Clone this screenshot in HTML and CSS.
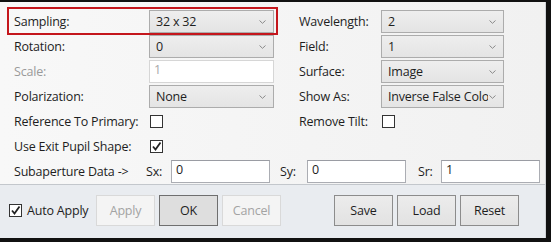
FILE: index.html
```html
<!DOCTYPE html>
<html lang="en">
<head>
    <meta charset="UTF-8">
    <title>Wavefront Map Settings</title>
    <link rel="stylesheet" href="styles.css">
</head>
<body>
    <div class="dialog">
        <div class="highlight"></div>
        <div class="settings">
            <div class="grid">
                <span class="label">Sampling:</span>
                <div class="combo"><span>32 x 32</span><svg class="chev" width="7" height="4" viewBox="0 0 7 4"><path d="M0.5 0.5 L3.5 3.3 L6.5 0.5" fill="none" stroke="#8a8a8a" stroke-width="1"/></svg></div>
                <span></span>
                <span class="label">Wavelength:</span>
                <div class="combo"><span>2</span><svg class="chev" width="7" height="4" viewBox="0 0 7 4"><path d="M0.5 0.5 L3.5 3.3 L6.5 0.5" fill="none" stroke="#8a8a8a" stroke-width="1"/></svg></div>

                <span class="label">Rotation:</span>
                <div class="combo"><span>0</span><svg class="chev" width="7" height="4" viewBox="0 0 7 4"><path d="M0.5 0.5 L3.5 3.3 L6.5 0.5" fill="none" stroke="#8a8a8a" stroke-width="1"/></svg></div>
                <span></span>
                <span class="label">Field:</span>
                <div class="combo"><span>1</span><svg class="chev" width="7" height="4" viewBox="0 0 7 4"><path d="M0.5 0.5 L3.5 3.3 L6.5 0.5" fill="none" stroke="#8a8a8a" stroke-width="1"/></svg></div>

                <span class="label disabled">Scale:</span>
                <div class="field off">1</div>
                <span></span>
                <span class="label">Surface:</span>
                <div class="combo"><span>Image</span><svg class="chev" width="7" height="4" viewBox="0 0 7 4"><path d="M0.5 0.5 L3.5 3.3 L6.5 0.5" fill="none" stroke="#8a8a8a" stroke-width="1"/></svg></div>

                <span class="label">Polarization:</span>
                <div class="combo"><span>None</span><svg class="chev" width="7" height="4" viewBox="0 0 7 4"><path d="M0.5 0.5 L3.5 3.3 L6.5 0.5" fill="none" stroke="#8a8a8a" stroke-width="1"/></svg></div>
                <span></span>
                <span class="label">Show As:</span>
                <div class="combo"><span class="clip">Inverse False Colo</span><svg class="chev" width="7" height="4" viewBox="0 0 7 4"><path d="M0.5 0.5 L3.5 3.3 L6.5 0.5" fill="none" stroke="#8a8a8a" stroke-width="1"/></svg></div>

                <span class="label">Reference To Primary:</span>
                <div class="cell"><span class="check"></span></div>
                <span></span>
                <span class="label">Remove Tilt:</span>
                <div class="cell"><span class="check"></span></div>

                <span class="label">Use Exit Pupil Shape:</span>
                <div class="cell"><span class="check"><svg width="11" height="11" viewBox="0 0 11 11"><path d="M2 5.5 L4.5 8.5 L9.5 1.5" fill="none" stroke="#222" stroke-width="1.8"/></svg></span></div>
            </div>

            <div class="subaperture">
                <span class="label sub-title">Subaperture Data -&gt;</span>
                <span class="label sx">Sx:</span>
                <div class="field">0</div>
                <span class="label sy">Sy:</span>
                <div class="field">0</div>
                <span class="label sr">Sr:</span>
                <div class="field">1</div>
            </div>
        </div>

        <div class="footer">
            <label class="auto">
                <span class="check"><svg width="11" height="11" viewBox="0 0 11 11"><path d="M2 5.5 L4.5 8.5 L9.5 1.5" fill="none" stroke="#222" stroke-width="1.8"/></svg></span>
                Auto Apply
            </label>
            <div class="buttons">
                <button class="btn" disabled>Apply</button>
                <button class="btn default">OK</button>
                <button class="btn" disabled>Cancel</button>
            </div>
            <div class="buttons right">
                <button class="btn">Save</button>
                <button class="btn">Load</button>
                <button class="btn">Reset</button>
            </div>
        </div>
    </div>
</body>
</html>
```

FILE: styles.css
```css
body {
    margin: 0;
    background: #111;
    font-family: "Open Sans", "Noto Sans", Arial, sans-serif;
    font-size: 12.5px;
    letter-spacing: -0.2px;
    color: #1e1e1e;
    width: 551px;
    height: 242px;
    overflow: hidden;
}
.dialog {
    position: relative;
    margin-top: 2px;
    width: 545px;
    height: 236px;
    background: linear-gradient(to right, #f8f8f8, #f1f1f1);
    border-right: 1px solid #cfd2d6;
    display: flex;
    flex-direction: column;
}
.highlight {
    position: absolute;
    left: 7px;
    top: 5px;
    width: 267px;
    height: 24px;
    border: 2px solid #c4161c;
}
.settings {
    padding: 7px 0 0 14px;
    height: 183px;
    box-sizing: border-box;
    border-bottom: 1px solid #c3c7cc;
}
.grid {
    display: grid;
    grid-template-columns: 135px 125px 25px 82px 123px;
    grid-auto-rows: 25px;
    align-items: center;
}
.label {
    white-space: nowrap;
    line-height: 16px;
}
.label.disabled {
    color: #9a9a9a;
}
.combo {
    height: 23px;
    box-sizing: border-box;
    border: 1px solid #acacac;
    background: linear-gradient(#eeeeee, #e4e4e4);
    display: flex;
    align-items: center;
    justify-content: space-between;
    padding: 0 7px 0 6px;
}
.combo .clip {
    width: 100px;
    overflow: hidden;
    white-space: nowrap;
}
.chev {
    flex: none;
}
.field {
    height: 23px;
    box-sizing: border-box;
    border: 1px solid #abadb3;
    border-top-color: #9a9ca3;
    background: #fff;
    padding: 1px 0 0 4px;
    line-height: 16px;
}
.field.off {
    border-color: #d6d6d6;
    color: #a8a8a8;
}
.cell {
    display: flex;
    align-items: center;
    padding-left: 1px;
}
.check {
    width: 13px;
    height: 13px;
    box-sizing: border-box;
    border: 1px solid #333;
    background: #fff;
    display: flex;
    align-items: center;
    justify-content: center;
}
.subaperture {
    display: flex;
    align-items: center;
    height: 25px;
}
.subaperture .field {
    width: 99px;
}
.sub-title {
    width: 132px;
}
.sx {
    width: 25px;
}
.sy {
    margin-left: 10px;
    width: 27px;
}
.sr {
    margin-left: 12px;
    width: 23px;
}
.footer {
    flex: 1;
    background: #e9ecf0;
    display: flex;
    align-items: center;
    padding: 0 0 2px 9px;
}
.auto {
    display: flex;
    align-items: center;
    gap: 5px;
    width: 87px;
    white-space: nowrap;
}
.buttons {
    display: flex;
    gap: 4px;
}
.buttons.right {
    margin-left: 53px;
}
.btn {
    width: 59px;
    height: 31px;
    font-family: inherit;
    font-size: 12.5px;
    letter-spacing: -0.2px;
    color: #1e1e1e;
    background: linear-gradient(#ececec, #e2e2e2);
    border: 1px solid #8c8c8c;
    padding: 0;
}
.btn.default {
    background: #dedede;
    border-color: #6f6f6f;
}
.btn:disabled {
    background: #f4f4f4;
    border-color: #d9d9d9;
    color: #a3a3a3;
}
```
